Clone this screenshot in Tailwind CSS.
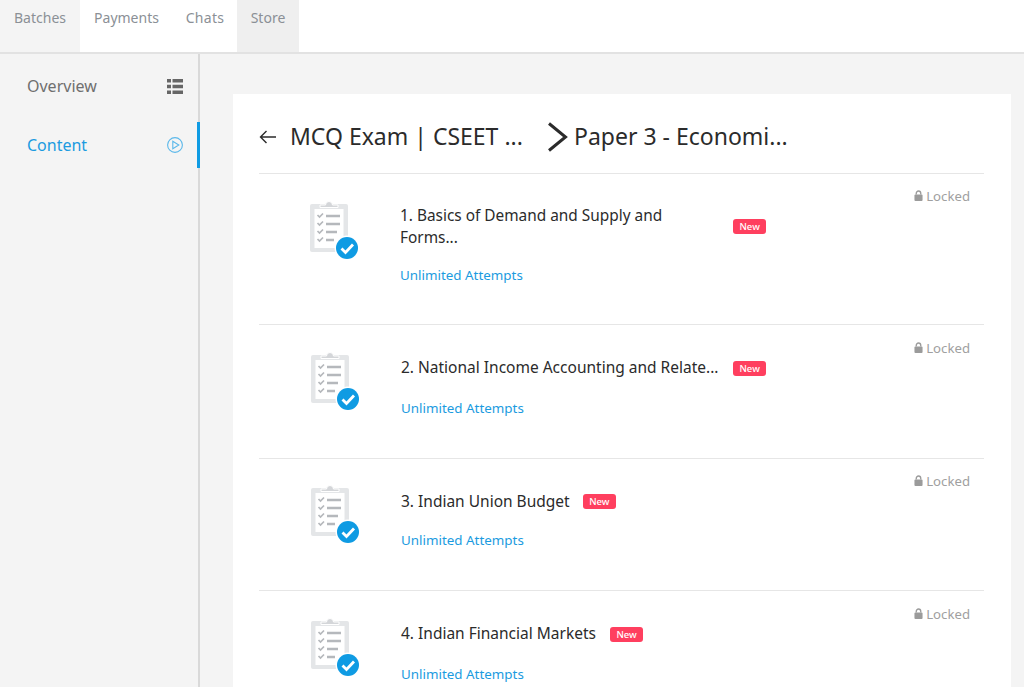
<html lang="en">
<head>
    <meta charset="utf-8"/>
    <title>Content</title>
    <script src="https://cdn.jsdelivr.net/npm/@tailwindcss/browser@4"></script>
</head>
<body class="h-[687px] overflow-hidden bg-[#f4f4f4] text-[#2b2b2b] font-['Noto_Sans',sans-serif]">
    <svg class="hidden">
        <symbol id="sheet" viewBox="0 0 48 58">
            <rect x="0" y="3" width="38" height="48" rx="2" fill="#e4e6e8"/>
            <rect x="4.500" y="8" width="29" height="39" fill="#fff"/>
            <path d="M10 6.500h18v-2.500h-5.500a3.500 3.500 0 0 0-7 0h-5.500z" fill="#d4d6d9" stroke="#fff" stroke-width="1"/>
            <g fill="none" stroke="#b5b8bc" stroke-width="1.700">
                <path d="M7.500 14l2 2 3.500-3.500M7.500 22l2 2 3.500-3.500M7.500 30l2 2 3.500-3.500M7.500 38l2 2 3.500-3.500"/>
            </g>
            <g fill="none" stroke="#b5b8bc" stroke-width="2.400">
                <path d="M16 15h14M16 23h14M16 31h11M16 39h8"/>
            </g>
            <circle cx="37" cy="47" r="12.500" fill="#fff"/>
            <circle cx="37" cy="47" r="11" fill="#0f9be3"/>
            <path d="M31.500 47.500l4 4 7.500-8" fill="none" stroke="#fff" stroke-width="2.800"/>
        </symbol>
        <symbol id="lock" viewBox="0 0 10 12">
            <path d="M2.500 5V3.500a2.500 2.500 0 0 1 5 0V5" fill="none" stroke="#9b9b9b" stroke-width="1.500"/>
            <rect x="0.500" y="5" width="9" height="7" rx="1" fill="#9b9b9b"/>
        </symbol>
    </svg>

    <header class="flex h-[54px] bg-white border-b-2 border-[#e2e2e2] text-[14px] text-[#8b9096]">
        <a class="flex w-[80px] items-center justify-center pb-[18px] bg-[#f4f4f4]" href="#">Batches</a>
        <a class="flex w-[93px] items-center justify-center pb-[18px]" href="#">Payments</a>
        <a class="flex w-[64px] items-center justify-center pb-[18px] tracking-[0.3px]" href="#">Chats</a>
        <a class="flex w-[62px] items-center justify-center pb-[18px] bg-[#efefef]" href="#">Store</a>
    </header>

    <div class="flex">
        <aside class="w-[200px] h-[633px] shrink-0 border-r-2 border-[#d9d9d9]">
            <a class="flex h-[60px] mt-[2px] items-center justify-between pl-[27px] pr-[15px] text-[16px] text-[#6f6f6f]" href="#">
                Overview
                <svg class="w-[16px] h-[15px]" viewBox="0 0 16 15" fill="#666"><path d="M0 0h4v3.500H0zM5.500 0H16v3.500H5.500zM0 5.750h4v3.500H0zM5.500 5.750H16v3.500H5.500zM0 11.500h4V15H0zM5.500 11.500H16V15H5.500z"/></svg>
            </a>
            <a class="flex h-[46px] mt-[6px] items-center justify-between pl-[27px] pr-[14px] text-[16px] text-[#1b9be0] border-r-[3px] border-[#0f9be3] -mr-[2px]" href="#">
                Content
                <svg class="w-[16px] h-[16px]" viewBox="0 0 16 16" fill="none" stroke="#5bb8ea" stroke-width="1.100"><circle cx="8" cy="8" r="7.400"/><path d="M5.800 4.300v7.400L11.800 8z"/></svg>
            </a>
        </aside>

        <main class="flex-1 pl-[33px] pr-[13px] pt-[40px]">
            <section class="bg-white pl-[26px] pr-[27px] pt-[17px] h-[700px]">
                <div class="flex items-center h-[52px] border-b border-[#e6e6e6] pb-[10px] box-content text-[23px] leading-none">
                    <svg class="w-[18px] h-[14px] mr-[13px]" viewBox="0 0 18 14" fill="none" stroke="#2b2b2b" stroke-width="1.400"><path d="M17 7H1.500M7.500 1L1.500 7l6 6"/></svg>
                    <span class="w-[257px] mb-[2px]">MCQ Exam | CSEET ...</span>
                    <svg class="w-[21px] h-[30px] mr-[6px]" viewBox="0 0 21 30" fill="none" stroke="#2b2b2b" stroke-width="3"><path d="M2 1.500L18.500 15 2 28.500"/></svg>
                    <span class="mb-[2px]">Paper 3 - Economi...</span>
                </div>

                <div class="flex h-[151px] border-b border-[#e6e6e6]">
                    <svg class="w-[48px] h-[58px] mt-[27px] ml-[51px] shrink-0"><use href="#sheet"/></svg>
                    <div class="w-[333px] ml-[42px] pt-[31px] text-[15.400px] leading-[22px]">
                        <p>1. Basics of Demand and Supply and<br/>Forms...</p>
                        <p class="mt-[17px] text-[13.400px] leading-[18px] text-[#1b9be0]">Unlimited Attempts</p>
                    </div>
                    <span class="self-start mt-[45px] rounded-[3px] bg-[#ff3f5f] px-[6.500px] text-[9.500px] leading-[15px] font-medium text-white">New</span>
                    <span class="ml-auto mr-[14px] mt-[14px] flex h-[18px] items-center gap-[3px] text-[13.200px] text-[#a0a0a0]"><svg class="w-[9px] h-[11px] mb-[3px]"><use href="#lock"/></svg>Locked</span>
                </div>

                <div class="flex h-[134px] border-b border-[#e6e6e6]">
                    <svg class="w-[48px] h-[58px] mt-[27px] ml-[52px] shrink-0"><use href="#sheet"/></svg>
                    <div class="w-[332px] ml-[42px] pt-[31px] text-[15.500px] leading-[22px]">
                        <p>2. National Income Accounting and Relate...</p>
                        <p class="mt-[21px] text-[13.400px] leading-[18px] text-[#1b9be0]">Unlimited Attempts</p>
                    </div>
                    <span class="self-start mt-[36px] rounded-[3px] bg-[#ff3f5f] px-[6.500px] text-[9.500px] leading-[15px] font-medium text-white">New</span>
                    <span class="ml-auto mr-[14px] mt-[15px] flex h-[18px] items-center gap-[3px] text-[13.200px] text-[#a0a0a0]"><svg class="w-[9px] h-[11px] mb-[3px]"><use href="#lock"/></svg>Locked</span>
                </div>

                <div class="flex h-[132px] border-b border-[#e6e6e6]">
                    <svg class="w-[48px] h-[58px] mt-[26px] ml-[52px] shrink-0"><use href="#sheet"/></svg>
                    <div class="ml-[42px] pt-[31px] text-[15.500px] leading-[22px]">
                        <p>3. Indian Union Budget</p>
                        <p class="mt-[19px] text-[13.400px] leading-[18px] text-[#1b9be0]">Unlimited Attempts</p>
                    </div>
                    <span class="self-start mt-[35px] ml-[13px] rounded-[3px] bg-[#ff3f5f] px-[6.500px] text-[9.500px] leading-[15px] font-medium text-white">New</span>
                    <span class="ml-auto mr-[14px] mt-[14px] flex h-[18px] items-center gap-[3px] text-[13.200px] text-[#a0a0a0]"><svg class="w-[9px] h-[11px] mb-[3px]"><use href="#lock"/></svg>Locked</span>
                </div>

                <div class="flex h-[134px]">
                    <svg class="w-[48px] h-[58px] mt-[27px] ml-[52px] shrink-0"><use href="#sheet"/></svg>
                    <div class="ml-[42px] pt-[31px] text-[15.500px] leading-[22px]">
                        <p>4. Indian Financial Markets</p>
                        <p class="mt-[21px] text-[13.400px] leading-[18px] text-[#1b9be0]">Unlimited Attempts</p>
                    </div>
                    <span class="self-start mt-[36px] ml-[14px] rounded-[3px] bg-[#ff3f5f] px-[6.500px] text-[9.500px] leading-[15px] font-medium text-white">New</span>
                    <span class="ml-auto mr-[14px] mt-[15px] flex h-[18px] items-center gap-[3px] text-[13.200px] text-[#a0a0a0]"><svg class="w-[9px] h-[11px] mb-[3px]"><use href="#lock"/></svg>Locked</span>
                </div>
            </section>
        </main>
    </div>
</body>
</html>
